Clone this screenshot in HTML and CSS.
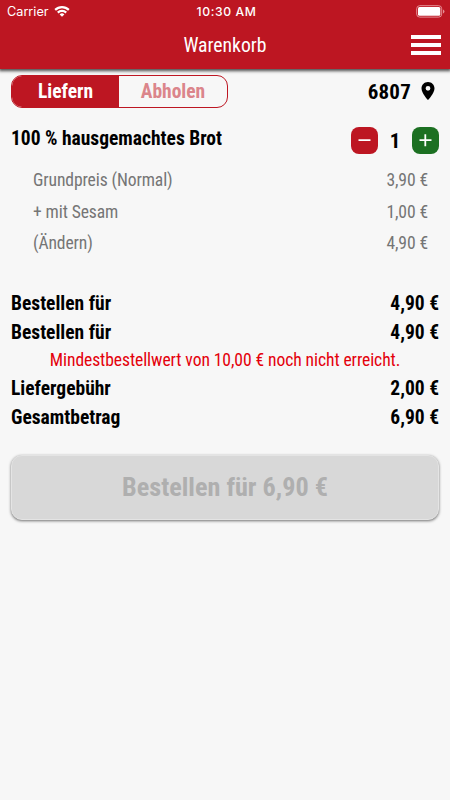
FILE: index.html
```html
<!DOCTYPE html>
<html lang="de">
<head>
<meta charset="utf-8">
<title>Warenkorb</title>
<link rel="stylesheet" href="styles.css">
</head>
<body>
<header class="header">
  <div class="status">
    <div class="carrier"><span>Carrier</span>
      <svg class="wifi" viewBox="0 0 16 12"><path d="M0.4 4.1a10.8 10.8 0 0 1 15.2 0l-1.5 1.6a8.6 8.6 0 0 0-12.2 0zM3 6.8a7.1 7.1 0 0 1 10 0l-1.6 1.6a4.9 4.9 0 0 0-6.8 0zM5.6 9.4a3.4 3.4 0 0 1 4.8 0L8 11.8z" fill="#fff"/></svg>
    </div>
    <span class="time">10:30 AM</span>
    <svg class="battery" viewBox="0 0 29 13"><rect x="0.7" y="0.7" width="25" height="11.4" rx="3" fill="none" stroke="#e58f95" stroke-width="1"/><rect x="2" y="2" width="22.3" height="8.8" rx="1.5" fill="#fff"/><path d="M27 4.5v4c1-.5 1.5-1.2 1.5-2s-.5-1.500-1.500-2z" fill="#e58f95"/></svg>
  </div>
  <div class="bar">
    <h1 class="title">Warenkorb</h1>
    <div class="menu"><i></i><i></i><i></i></div>
  </div>
</header>
<main class="main">
  <div class="top">
    <div class="toggle"><b class="on">Liefern</b><b class="off">Abholen</b></div>
    <div class="place"><b class="zip">6807</b><svg class="pin" viewBox="0 0 14 18"><path d="M7 0C3.200 0 .5 2.900.5 6.400.5 11 7 18 7 18s6.500-7 6.500-11.600C13.500 2.900 10.800 0 7 0zm0 8.700a2.400 2.400 0 1 1 0-4.800 2.400 2.400 0 0 1 0 4.800z"/></svg></div>
  </div>
  <div class="item">
    <b class="name">100 % hausgemachtes Brot</b>
    <div class="stepper">
      <svg class="step minus" viewBox="0 0 27 27"><path d="M7.500 13.200h12"/></svg>
      <b class="count">1</b>
      <svg class="step plus" viewBox="0 0 27 27"><path d="M7.500 13.200h12M13.300 7.200v12"/></svg>
    </div>
  </div>
  <div class="details">
    <div class="row"><span>Grundpreis (Normal)</span><span>3,90 €</span></div>
    <div class="row"><span>+ mit Sesam</span><span>1,00 €</span></div>
    <div class="row"><span>(Ändern)</span><span>4,90 €</span></div>
  </div>
  <div class="totals">
    <div class="row"><b>Bestellen für</b><b>4,90 €</b></div>
    <div class="row"><b>Bestellen für</b><b>4,90 €</b></div>
    <p class="warn"><span>Mindestbestellwert von 10,00 € noch nicht erreicht.</span></p>
    <div class="row"><b>Liefergebühr</b><b>2,00 €</b></div>
    <div class="row"><b>Gesamtbetrag</b><b>6,90 €</b></div>
  </div>
  <button class="order" disabled><span>Bestellen für 6,90 €</span></button>
</main>
</body>
</html>
```
FILE: styles.css
```css
* { box-sizing: border-box; }
body {
  margin: 0;
  min-height: 800px;
  background: #f7f7f7;
  color: #000;
  font-family: "Roboto Condensed", Roboto, sans-serif;
  font-stretch: 75%;
  font-size: 19.5px;
}
b { font-weight: 700; }
span, b { white-space: nowrap; }
.header {
  height: 69px;
  background: #bd1622;
  color: #fff;
  box-shadow: 0 1px 3px 1px rgba(0, 0, 0, .7);
}
.status {
  height: 22px;
  padding: 0 5px 0 7px;
  display: grid;
  grid-template-columns: 1fr auto 1fr;
  align-items: center;
  font-family: Inter, sans-serif;
  font-stretch: 100%;
  font-size: 12.7px;
}
.carrier { display: flex; align-items: center; gap: 5px; }
.wifi { width: 16px; height: 12px; margin-top: -1px; }
.time { font-size: 12.200px; font-weight: 500; letter-spacing: .6px; padding-left: 1px; }
.battery { width: 29px; height: 13px; justify-self: end; }
.bar {
  height: 47px;
  padding: 0 9px 2px 0;
  display: grid;
  grid-template-columns: 39px 1fr 30px;
  align-items: center;
}
.title { grid-column: 2; margin: 2px 0 0; text-align: center; font-size: 19.700px; font-weight: 400; }
.menu { height: 20px; display: flex; flex-direction: column; justify-content: space-between; }
.menu i { height: 4px; background: #fff; }
.main { padding: 6px 11px 0; }
.top { height: 33px; display: flex; justify-content: space-between; }
.toggle {
  width: 217px;
  height: 33px;
  border: 1px solid #bd1622;
  border-radius: 11px;
  display: grid;
  grid-template-columns: 107px 1fr;
  overflow: hidden;
  line-height: 31px;
  text-align: center;
}
.on { background: #bd1622; color: #fff; }
.off { color: #db858b; }
.place { display: flex; align-items: center; gap: 10px; padding-right: 4px; }
.zip { font-size: 21px; letter-spacing: .2px; }
.pin { width: 14px; height: 18px; margin-top: -2px; }
.item { height: 56px; padding-top: 19px; display: flex; justify-content: space-between; }
.name { line-height: 23px; }
.stepper { height: 27px; display: grid; grid-template-columns: 27px 34px 27px; align-items: center; text-align: center; }
.step { width: 27px; height: 27px; border-radius: 8px; fill: none; stroke: #fff; stroke-width: 1.8; }
.minus { background: #bd1622; }
.plus { background: #1c7022; }
.count { font-size: 21px; }
.row { display: flex; justify-content: space-between; }
.details { padding: 1px 11px 0 22px; color: #757575; font-size: 17.600px; letter-spacing: -.11px; line-height: 31.500px; font-weight: 400; }
.totals { padding-top: 29px; line-height: 29.500px; }
.warn { margin: 0; color: #e4000b; text-align: center; font-size: 17.600px; letter-spacing: -.09px; line-height: 24px; padding-bottom: 2px; font-weight: 400; }
.order {
  display: block;
  width: 428px;
  height: 65px;
  margin-top: 22px;
  padding: 0;
  border: 1px solid #e4e4e4;
  border-radius: 11px;
  background: #d8d8d8;
  box-shadow: 0 1px 3px rgba(0, 0, 0, .55);
  color: #afafaf;
  font: 700 26.200px "Roboto Condensed", Roboto, sans-serif;
  font-stretch: 75%;
}
```
